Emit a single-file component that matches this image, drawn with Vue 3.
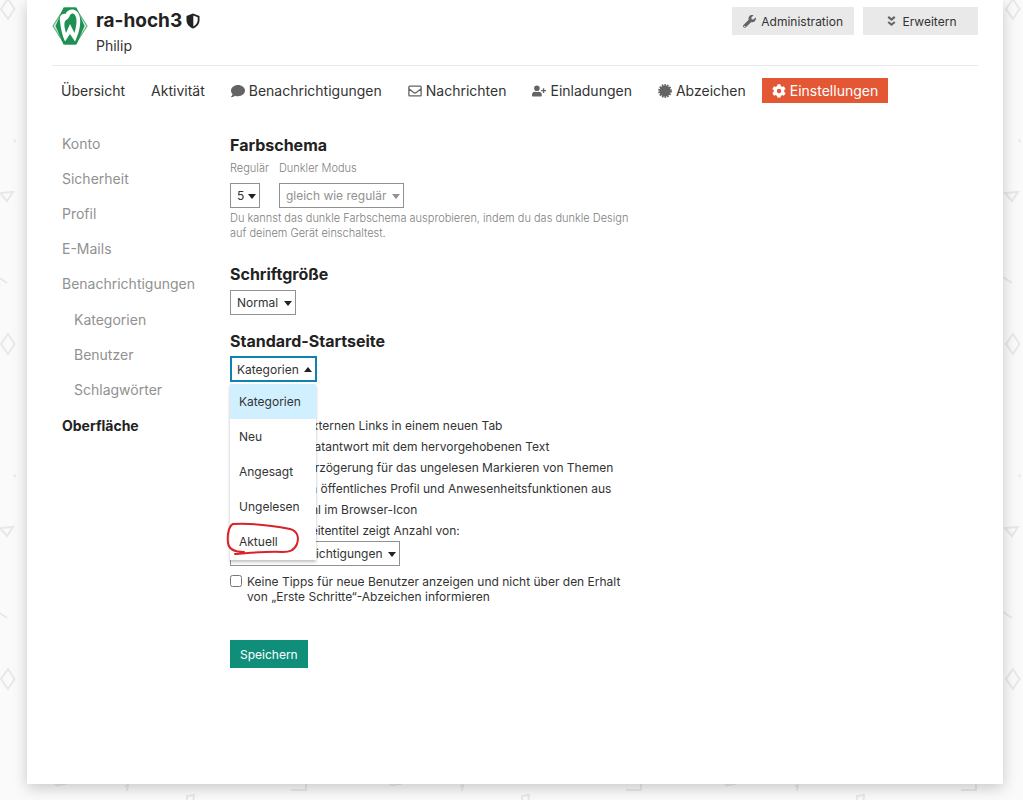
<script setup>
import { ref } from 'vue'

const sidebar = [
  { label: 'Konto' },
  { label: 'Sicherheit' },
  { label: 'Profil' },
  { label: 'E-Mails' },
  {
    label: 'Benachrichtigungen',
    children: ['Kategorien', 'Benutzer', 'Schlagwörter'],
  },
  { label: 'Oberfläche', active: true },
]

const homeOptions = ['Kategorien', 'Neu', 'Angesagt', 'Ungelesen', 'Aktuell']
const home = ref('Kategorien')
const open = ref(true)

function choose(option) {
  home.value = option
  open.value = false
}

const toggles = ref([
  { label: 'Öffne alle externen Links in einem neuen Tab', on: false },
  { label: 'Aktiviere Zitatantwort mit dem hervorgehobenen Text', on: true },
  { label: 'Aktiviere Verzögerung für das ungelesen Markieren von Themen', on: false },
  { label: 'Blende mein öffentliches Profil und Anwesenheitsfunktionen aus', on: false },
  { label: 'Zeige Anzahl im Browser-Icon', on: false },
])
const hideTips = ref(false)
</script>

<template>
  <div class="page">
    <svg class="backdrop" aria-hidden="true">
      <defs>
        <pattern id="doodles" x="-20" y="-20" width="335" height="335" patternUnits="userSpaceOnUse">
          <g transform="translate(20 20)" fill="none" stroke="#e8e8e8" stroke-width="2">
            <path d="M8 -1L14.500 9L8 19L1 9Z" />
            <path d="M0 193L13 192L7 201Z" />
            <path d="M14 139l2 2l-2 1z" stroke-width="1" />
            <path d="M-2 277L7 283" />
            <path d="M54 113l3 2.500l10 -2" />
            <path d="M128 112l-1 9M125 116h4" />
            <path d="M187 134v-8l7 -1l-1 9" />
            <path d="M291 120h15v-8" />
          </g>
        </pattern>
      </defs>
      <rect width="100%" height="100%" fill="url(#doodles)" />
    </svg>

    <main class="panel">
      <header class="profile">
        <svg class="avatar" viewBox="0 0 36 38" aria-hidden="true">
          <path d="M12 0.500H24L36 19L24 37.500H12L0 19Z" fill="#cfe9da" />
          <path d="M12.500 1H23.500L35 19L23.500 37H12.500L1 19Z" fill="none" stroke="#1d9053" stroke-width="0.700" />
          <path d="M11.500 0.500H24.500L32.500 19L24.500 37.500H11.500L3.500 19Z" fill="#1d9053" />
          <path d="M8 14C7 9 10 6 13.500 7C16 1 26 0 28 11C29 19 26.500 27 23 34.500L18 27L13 34.500C10 28 8.500 20 8 14Z" fill="#fff" />
          <path d="M12.500 16C13 12 17 13 18 8C21 4 24.500 8 24.500 14C24.500 18 23.500 22 22.500 26L18 17L14 26C13 22 12 19 12.500 16Z" fill="#1d9053" />
        </svg>
        <div class="who">
          <h1>
            ra-hoch3
            <svg class="shield" viewBox="0 0 14 16" aria-hidden="true">
              <path d="M7 0.500L13.500 3V7C13.500 11.500 10.500 14 7 15.500C3.500 14 0.500 11.500 0.500 7V3Z" fill="#222" />
              <path d="M7.300 2.500L11.700 4.200V7C11.700 10 10 12 7.300 13.500Z" fill="#fff" />
            </svg>
          </h1>
          <p>Philip</p>
        </div>
        <div class="actions">
          <button type="button" class="btn">
            <svg viewBox="0 0 512 512" aria-hidden="true"><path fill="currentColor" d="M507 114c-3-12-18-15-26-7l-74 74-68-11-11-68 74-74c9-9 5-24-7-27C347-11 295 2 258 39c-40 40-51 97-35 147L19 390c-26 26-26 68 0 94s68 26 94 0l203-203c51 17 108 6 148-34 37-37 50-89 43-133zM64 472a24 24 0 1 1 0-48 24 24 0 0 1 0 48z" /></svg>
            Administration
          </button>
          <button type="button" class="btn wide">
            <svg viewBox="0 0 14 14" aria-hidden="true"><path d="M3.500 2l3.500 3L10.500 2M3.500 7.500l3.500 3L10.500 7.500" fill="none" stroke="currentColor" stroke-width="2.200" /></svg>
            Erweitern
          </button>
        </div>
      </header>

      <nav class="tabs">
        <a href="#">Übersicht</a>
        <a href="#">Aktivität</a>
        <a href="#">
          <svg viewBox="0 0 512 512" aria-hidden="true"><path fill="currentColor" d="M256 32C115 32 0 125 0 240c0 50 21 95 57 131-13 50-54 94-54 95-5 5-5 10 2 14 66 0 116-32 141-51 33 12 70 19 110 19 141 0 256-93 256-208S397 32 256 32z" /></svg>
          Benachrichtigungen
        </a>
        <a href="#">
          <svg viewBox="0 0 16 16" aria-hidden="true"><path d="M1 3.500Q1 2.500 2 2.500H14Q15 2.500 15 3.500V12.500Q15 13.500 14 13.500H2Q1 13.500 1 12.500ZM1 5.500L6.500 9.700Q8 10.800 9.500 9.700L15 5.500" fill="none" stroke="currentColor" stroke-width="1.500" /></svg>
          Nachrichten
        </a>
        <a href="#">
          <svg viewBox="0 0 640 512" aria-hidden="true"><path fill="currentColor" d="M624 208h-64v-64c0-9-7-16-16-16h-32c-9 0-16 7-16 16v64h-64c-9 0-16 7-16 16v32c0 9 7 16 16 16h64v64c0 9 7 16 16 16h32c9 0 16-7 16-16v-64h64c9 0 16-7 16-16v-32c0-9-7-16-16-16zM224 256a128 128 0 1 0 0-256 128 128 0 0 0 0 256zm90 32h-17a174 174 0 0 1-146 0h-17C60 288 0 348 0 422v42c0 27 22 48 48 48h352c27 0 48-21 48-48v-42c0-74-60-134-134-134z" /></svg>
          Einladungen
        </a>
        <a href="#">
          <svg viewBox="0 0 16 16" aria-hidden="true">
            <circle cx="8" cy="8" r="6.500" fill="currentColor" />
            <circle cx="8" cy="8" r="6.900" fill="none" stroke="currentColor" stroke-width="2" stroke-dasharray="1.800 1.300" />
          </svg>
          Abzeichen
        </a>
        <a href="#" class="current" aria-current="page">
          <svg viewBox="0 0 512 512" aria-hidden="true"><path fill="currentColor" d="M487 316l-42-25c4-23 4-47 0-70l42-25c5-3 7-9 6-14-12-35-31-68-56-95-4-4-10-5-15-2l-42 25c-18-15-39-27-61-35V26c0-6-4-10-10-12-36-8-74-8-110 0-6 2-9 6-9 12v49c-23 8-44 20-62 35L87 85c-5-3-11-2-15 2-25 27-44 60-55 95-2 5 0 11 5 14l42 25c-4 23-4 47 0 70l-42 25c-5 3-7 9-5 14 11 35 30 68 55 95 4 4 10 5 15 2l42-25c18 15 39 27 62 35v49c0 6 3 10 9 12 36 8 74 8 110 0 6-2 10-6 10-12v-49c22-8 43-20 61-35l42 25c5 3 11 2 15-2 25-27 44-60 56-95 1-5-1-11-7-14zM256 336a80 80 0 1 1 0-160 80 80 0 0 1 0 160z" /></svg>
          Einstellungen
        </a>
      </nav>

      <div class="columns">
        <ul class="side">
          <li v-for="item in sidebar" :key="item.label">
            <a href="#" :class="{ active: item.active }">{{ item.label }}</a>
            <ul v-if="item.children" class="sub">
              <li v-for="child in item.children" :key="child"><a href="#">{{ child }}</a></li>
            </ul>
          </li>
        </ul>

        <form class="form" @submit.prevent>
          <section class="scheme">
            <h2>Farbschema</h2>
            <div class="pair">
              <div class="field">
                <label for="regular">Regulär</label>
                <span class="select short">
                  <select id="regular"><option>5</option></select>
                </span>
              </div>
              <div class="field">
                <label for="dark">Dunkler Modus</label>
                <span class="select muted">
                  <select id="dark"><option>gleich wie regulär</option></select>
                </span>
              </div>
            </div>
            <p class="hint">
              Du kannst das dunkle Farbschema ausprobieren, indem du das dunkle Design auf deinem Gerät einschaltest.
            </p>
          </section>

          <section class="size">
            <h2><label for="size">Schriftgröße</label></h2>
            <span class="select">
              <select id="size"><option>Normal</option></select>
            </span>
          </section>

          <section class="home">
            <h2 id="home-title">Standard-Startseite</h2>
            <div class="combo">
              <button
                type="button"
                class="trigger"
                aria-haspopup="listbox"
                aria-labelledby="home-title"
                :aria-expanded="open"
                @click="open = !open"
              >
                {{ home }}<span class="caret-up"></span>
              </button>
              <div v-if="open" class="menu">
                <ul role="listbox" aria-labelledby="home-title">
                  <li
                    v-for="option in homeOptions"
                    :key="option"
                    role="option"
                    :aria-selected="option === home"
                    :class="{ selected: option === home }"
                    @click="choose(option)"
                  >
                    {{ option }}
                  </li>
                </ul>
                <svg class="scribble" viewBox="0 0 76 36" aria-hidden="true">
                  <path d="M19 31C10 31 4 29 3 22C2 13 4 5 8 3C28 2 50 5 65 8C73 10 74 17 72 23C69 30 64 31 58 31C42 30 25 32 10 33" fill="none" stroke="#d8232a" stroke-width="2" stroke-linecap="round" />
                </svg>
              </div>
            </div>
          </section>

          <section class="toggles">
            <label v-for="toggle in toggles" :key="toggle.label" class="check">
              <input v-model="toggle.on" type="checkbox" />
              <span>{{ toggle.label }}</span>
            </label>
            <label class="count-label" for="count">Hintergrund-Seitentitel zeigt Anzahl von:</label>
            <span class="select">
              <select id="count"><option>neue Benachrichtigungen</option></select>
            </span>
            <label class="check tips">
              <input v-model="hideTips" type="checkbox" />
              <span>Keine Tipps für neue Benutzer anzeigen und nicht über den Erhalt von „Erste Schritte“-Abzeichen informieren</span>
            </label>
          </section>

          <button type="submit" class="save">Speichern</button>
        </form>
      </div>
    </main>
  </div>
</template>

<style>
body {
  margin: 0;
  background: #fafafa;
}
</style>

<style scoped>
.page {
  position: relative;
  min-height: 100vh;
  box-sizing: border-box;
  padding: 0 20px 16px 27px;
  overflow: hidden;
  font-family: Inter, "Liberation Sans", sans-serif;
  font-size: 12px;
  color: #333;
}

.backdrop {
  position: absolute;
  inset: 0;
  width: 100%;
  height: 100%;
}

.panel {
  position: relative;
  padding: 0 25px 116px;
  background: #fff;
  box-shadow: 0 4px 14px rgba(0, 0, 0, 0.2);
}

h1,
h2,
p,
ul {
  margin: 0;
  padding: 0;
}

ul {
  list-style: none;
}

button,
select {
  font: inherit;
}

.profile {
  display: flex;
  align-items: flex-start;
  padding: 7px 0;
  border-bottom: 1px solid #e9e9e9;
}

.avatar {
  width: 36px;
  height: 38px;
  margin-right: 8px;
}

.who {
  padding-top: 1px;
}

h1 {
  display: flex;
  align-items: center;
  gap: 4px;
  font-size: 19px;
  line-height: 26px;
  font-weight: 700;
  color: #222;
}

.shield {
  width: 14px;
  height: 16px;
}

.who p {
  font-size: 14px;
  line-height: 24px;
}

.actions {
  display: flex;
  gap: 9px;
  margin-left: auto;
}

.btn {
  display: flex;
  align-items: center;
  justify-content: center;
  gap: 5px;
  height: 28px;
  padding: 0 11px;
  border: 0;
  background: #e9e9e9;
  color: #333;
}

.btn.wide {
  width: 115px;
}

.btn svg {
  width: 13px;
  height: 13px;
  color: #646464;
}

.tabs {
  display: flex;
  gap: 6px;
  padding: 12px 0;
  margin-left: -1px;
}

.tabs a {
  display: flex;
  align-items: center;
  gap: 4px;
  height: 25px;
  padding: 0 10px;
  font-size: 14px;
  color: #333;
  text-decoration: none;
  white-space: nowrap;
}

.tabs svg {
  width: 14px;
  height: 14px;
  color: #646464;
}

.tabs .current {
  background: #e45735;
  color: #fff;
}

.tabs .current svg {
  color: #fff;
}

.columns {
  display: grid;
  grid-template-columns: 178px minmax(0, 1fr);
}

.side {
  padding: 11px 0 0 10px;
  font-size: 14px;
  line-height: 35px;
}

.side a {
  display: block;
  color: #919191;
  text-decoration: none;
}

.side .active {
  color: #222;
  font-weight: 700;
}

.sub {
  padding-left: 12px;
  margin: 1px 0;
}

.form {
  max-width: 408px;
  padding-top: 18px;
}

h2 {
  font-size: 16px;
  line-height: 24px;
  font-weight: 700;
  color: #222;
}

.pair {
  display: flex;
  gap: 10px;
}

.field {
  display: flex;
  flex-direction: column;
  align-items: flex-start;
}

.field label {
  font-size: 11px;
  font-weight: 300;
  line-height: 22px;
  margin-bottom: 4px;
  color: #808080;
}

.select {
  position: relative;
  display: inline-flex;
}

.select select {
  appearance: none;
  height: 25px;
  padding: 0 16px 0 6px;
  border: 1px solid #919191;
  border-radius: 0;
  background: #fff;
  color: #333;
}

.select.short select {
  padding-right: 14px;
}

.select::after {
  content: "";
  position: absolute;
  right: 4px;
  top: 11px;
  border: 4px solid transparent;
  border-top: 5px solid #222;
  border-bottom: 0;
  pointer-events: none;
}

.select.muted select {
  color: #919191;
}

.select.muted::after {
  border-top-color: #919191;
}

.hint {
  padding-top: 3px;
  font-size: 11px;
  font-weight: 300;
  line-height: 15px;
  color: #808080;
}

.size {
  margin-top: 21px;
}

.size h2 {
  margin-bottom: 4px;
}

.size .select {
  display: flex;
  width: fit-content;
}

.home {
  margin-top: 14px;
}

.home h2 {
  margin-bottom: 3px;
}

.combo {
  position: relative;
  width: 87px;
}

.trigger {
  display: flex;
  align-items: center;
  justify-content: space-between;
  width: 100%;
  height: 26px;
  padding: 0 3px 0 5px;
  border: 2px solid #0f82af;
  background: #fff;
  color: #333;
}

.caret-up {
  border: 4px solid transparent;
  border-bottom: 5px solid #222;
  border-top: 0;
}

.menu {
  position: absolute;
  z-index: 1;
  top: 100%;
  left: 0;
  width: 86px;
  margin-top: 2px;
  padding-bottom: 1px;
  background: #fff;
  box-shadow: 0 2px 3px rgba(0, 0, 0, 0.25);
}

.menu li {
  padding: 0 9px;
  line-height: 35px;
}

.menu .selected {
  background: #d1f0ff;
}

.scribble {
  position: absolute;
  left: -5px;
  bottom: 3px;
  width: 76px;
  height: 36px;
}

.toggles {
  padding-top: 33px;
}

.check {
  display: flex;
  align-items: flex-start;
  gap: 5px;
  line-height: 21px;
}

.check span {
  flex: 1;
}

.check input {
  flex: none;
  width: 12px;
  height: 12px;
  margin: 4px 0 0;
}

.count-label {
  display: block;
  line-height: 21px;
}

.check.tips {
  margin-top: 8px;
  line-height: 15px;
}

.check.tips input {
  margin-top: 1px;
}

.save {
  display: block;
  height: 28px;
  margin-top: 36px;
  padding: 0 10px;
  border: 0;
  background: #0f8f7a;
  color: #fff;
}
</style>
